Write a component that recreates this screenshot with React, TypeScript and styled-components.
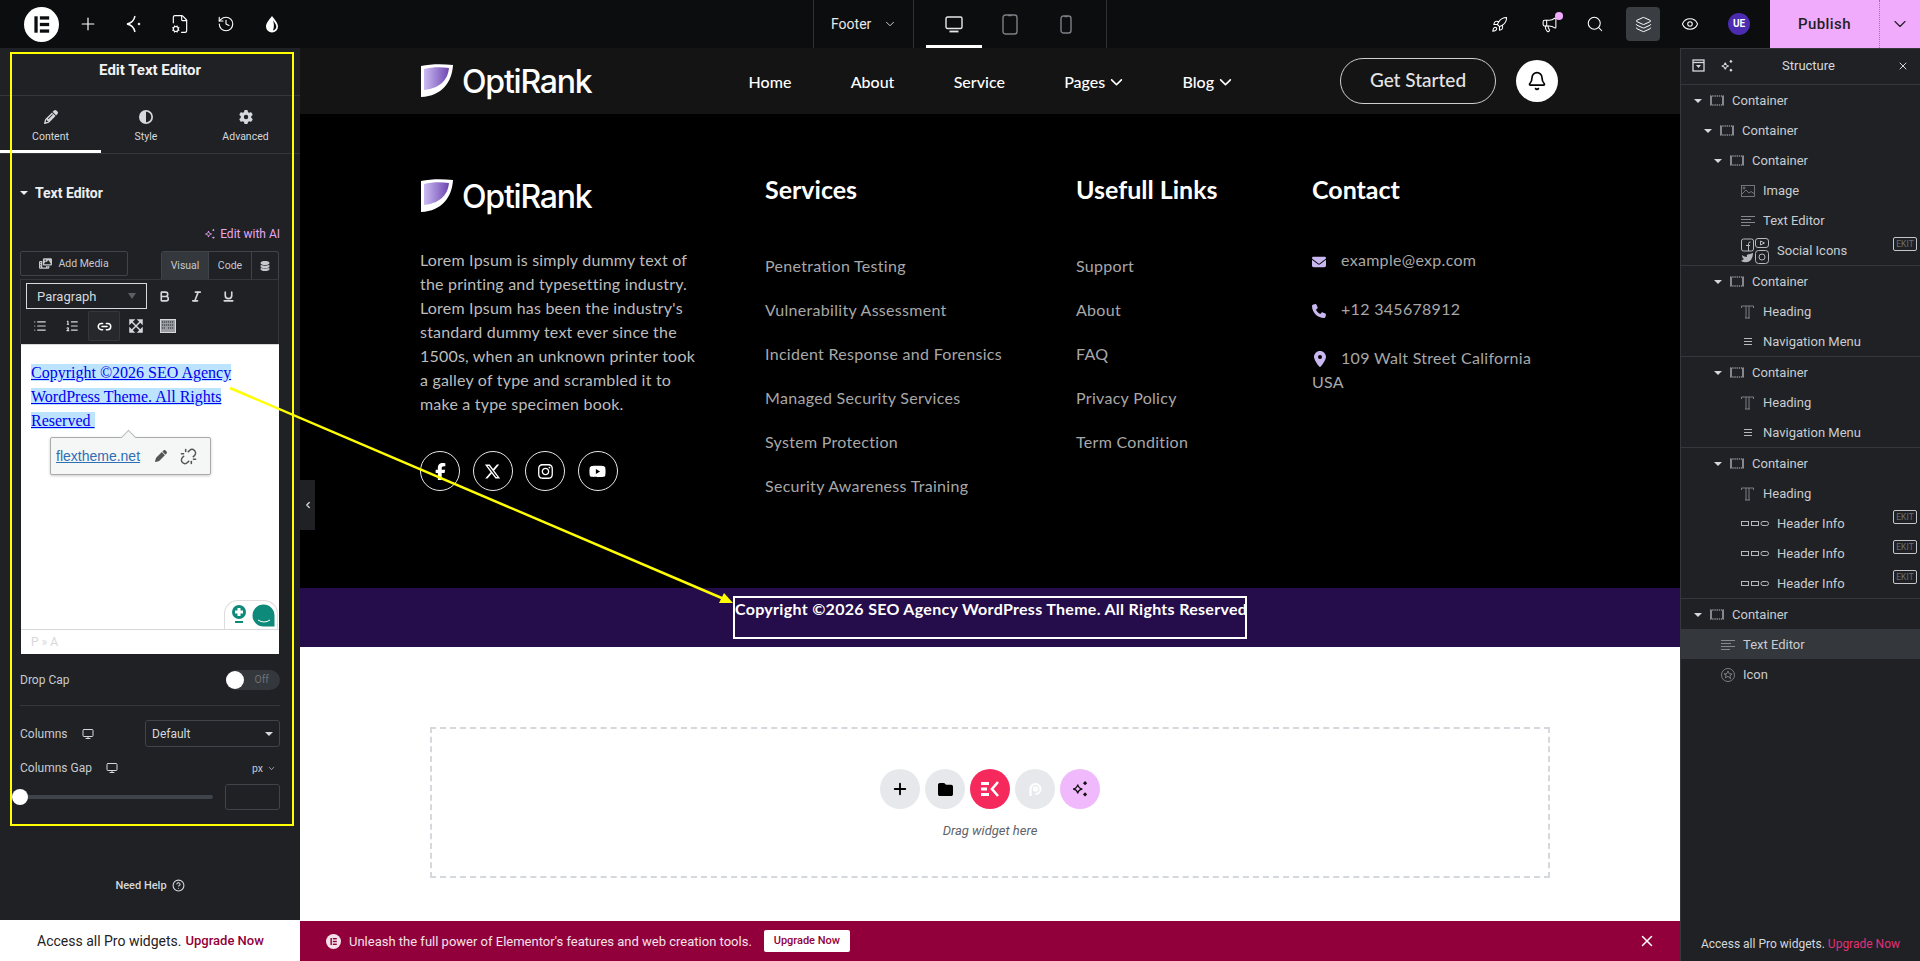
import React from "react";
import styled, { createGlobalStyle } from "styled-components";
import {
  Plus, History, Rocket, Megaphone, Search, Layers, Eye, ChevronDown, ChevronLeft, Bell, Link2, Unlink, Bold, Italic, Underline,
  List, ListOrdered, FileCog, X, Monitor, HelpCircle,
} from "lucide-react";
import { FaFacebookF, FaXTwitter, FaInstagram, FaYoutube, FaChevronDown, FaPhone, FaLocationDot, FaEnvelope, FaPencil, FaCircleHalfStroke, FaGear, FaPen, FaFolder, FaDatabase, FaPhotoFilm } from "react-icons/fa6";

const Global = createGlobalStyle`
  html, body { margin: 0; padding: 0; height: 100%; overflow: hidden; background: #fff; }
  #root { height: 100%; }
  * { box-sizing: border-box; }
`;

const UI = `Roboto, "Liberation Sans", sans-serif`;
const SITE = `Lato, "Open Sans", sans-serif`;

const Page = styled.div`
  position: relative;
  width: 1920px;
  height: 961px;
  display: grid;
  grid-template-rows: 48px 1fr;
  font-family: ${UI};
  overflow: hidden;
`;

/* ---------- top bar ---------- */
const TopBar = styled.header`
  display: flex;
  align-items: stretch;
  background: #0c0d0e;
  color: #fff;
`;
const TopLeft = styled.div`
  width: 813px;
  display: flex;
  align-items: center;
  padding-left: 24px;
`;
const LogoCircle = styled.div`
  width: 35px;
  height: 35px;
  margin-right: 6px;
  flex: none;
`;
const TopIcon = styled.div<{ $w?: number }>`
  width: ${(p) => p.$w ?? 46}px;
  display: flex;
  align-items: center;
  justify-content: center;
  color: #fff;
`;
const TemplateSwitch = styled.div`
  width: 101px;
  border-left: 1px solid #2f3237;
  border-right: 1px solid #2f3237;
  display: flex;
  align-items: center;
  padding-left: 17px;
  gap: 12px;
  font-size: 14px;
  color: #e6e8ea;
`;
const Devices = styled.div`
  width: 193px;
  border-right: 1px solid #2f3237;
  display: flex;
  padding-left: 12px;
`;
const DeviceTab = styled.div<{ $active?: boolean }>`
  width: 56px;
  display: flex;
  align-items: center;
  justify-content: center;
  color: ${(p) => (p.$active ? "#e6e8ea" : "#7c8087")};
  border-bottom: 3px solid ${(p) => (p.$active ? "#fff" : "transparent")};
  padding-top: 3px;
`;
const TopRight = styled.div`
  margin-left: auto;
  display: flex;
  align-items: center;
`;
const RightIcons = styled.div`
  display: flex;
  align-items: center;
  margin-right: 20px;
`;
const NoticeWrap = styled.div`
  position: relative;
  display: flex;
`;
const NoticeDot = styled.span`
  position: absolute;
  top: -4px;
  right: -5px;
  width: 8px;
  height: 8px;
  border-radius: 50%;
  background: #f0abfc;
`;
const LayersBox = styled.div`
  width: 34px;
  height: 34px;
  border-radius: 4px;
  background: #3a3d42;
  display: flex;
  align-items: center;
  justify-content: center;
  margin: 0 8px 0 10px;
`;
const Avatar = styled.div`
  width: 22px;
  height: 22px;
  border-radius: 50%;
  background: #4b2bb0;
  color: #fff;
  font: 700 10px/22px ${UI};
  text-align: center;
  margin-left: 16px;
`;
const PublishBtn = styled.div`
  width: 150px;
  height: 48px;
  background: #f0abfc;
  color: #1f2124;
  display: grid;
  grid-template-columns: 109px 1fr;
  align-items: center;
  font: 500 15px ${UI};
  letter-spacing: 0.4px;
`;
const PublishLabel = styled.span`
  text-align: center;
`;
const PublishMore = styled.span`
  height: 100%;
  border-left: 1px dotted #9a6fa5;
  display: flex;
  align-items: center;
  justify-content: center;
`;

/* ---------- body ---------- */
const Body = styled.div`
  display: grid;
  grid-template-columns: 300px 1fr 240px;
  min-height: 0;
`;
const LeftCol = styled.aside`
  display: flex;
  flex-direction: column;
`;
const Panel = styled.div`
  flex: 1;
  background: #1f2124;
  color: #d5d8dc;
  display: flex;
  flex-direction: column;
  position: relative;
`;
const PanelTitle = styled.div`
  height: 48px;
  border-bottom: 1px solid #34383c;
  display: flex;
  align-items: center;
  justify-content: center;
  font: 700 15px ${UI};
  color: #f0f1f3;
  padding-bottom: 3px;
`;
const Tabs = styled.div`
  height: 58px;
  border-bottom: 1px solid #34383c;
  display: grid;
  grid-template-columns: 101px 90px 109px;
`;
const Tab = styled.div<{ $active?: boolean }>`
  display: flex;
  flex-direction: column;
  align-items: center;
  padding-top: 14px;
  gap: 6px;
  font-size: 10.5px;
  color: #d5d8dc;
  border-bottom: 3px solid ${(p) => (p.$active ? "#fff" : "transparent")};
  height: 57px;
`;
const SectionTitle = styled.div`
  margin: 29px 20px 0;
  height: 20px;
  display: flex;
  align-items: center;
  gap: 7px;
  font: 700 14px ${UI};
  color: #eceef0;
`;
const Caret = styled.span`
  width: 0;
  height: 0;
  border-left: 4px solid transparent;
  border-right: 4px solid transparent;
  border-top: 4px solid currentColor;
`;
const EditAI = styled.div`
  margin: 21px 20px 0;
  height: 20px;
  display: flex;
  justify-content: flex-end;
  align-items: center;
  gap: 4px;
  font-size: 12px;
  color: #e7a6f0;
`;
const EditorTabs = styled.div`
  margin: 7px 21px 0 20px;
  height: 28px;
  display: flex;
`;
const AddMedia = styled.div`
  width: 108px;
  height: 25px;
  border: 1px solid #3f444b;
  border-radius: 2px;
  display: flex;
  align-items: center;
  justify-content: center;
  gap: 6px;
  font-size: 10.5px;
  color: #c6c9cd;
`;
const ModeTabs = styled.div`
  margin-left: auto;
  display: flex;
  border: 1px solid #3f444b;
  border-bottom: 0;
  border-radius: 3px 3px 0 0;
`;
const ModeTab = styled.div<{ $active?: boolean; $w: number }>`
  width: ${(p) => p.$w}px;
  display: flex;
  align-items: center;
  justify-content: center;
  font-size: 10.5px;
  color: #c6c9cd;
  background: ${(p) => (p.$active ? "#34383c" : "transparent")};
  & + & {
    border-left: 1px solid #3f444b;
  }
`;
const Toolbar = styled.div`
  margin: 0 21px 0 20px;
  height: 65px;
  border: 1px solid #34383c;
  border-bottom: 0;
  padding: 1px 5px 0;
  display: flex;
  flex-direction: column;
`;
const ToolRow = styled.div<{ $shift?: number }>`
  display: flex;
  align-items: center;
  margin-left: ${(p) => p.$shift ?? 0}px;
`;
const ParagraphSelect = styled.div`
  width: 121px;
  height: 26px;
  border: 1px solid #d5d8dc;
  display: flex;
  align-items: center;
  justify-content: space-between;
  padding: 0 10px;
  font-size: 13px;
  color: #d5d8dc;
  margin-right: 1px;
`;
const DimCaret = styled(Caret)`
  color: #5c6066;
  border-top-width: 6px;
`;
const ToolBtn = styled.div<{ $active?: boolean }>`
  width: 32px;
  height: 30px;
  display: flex;
  align-items: center;
  justify-content: center;
  color: #d5d8dc;
  border-radius: 2px;
  background: ${(p) => (p.$active ? "#26282b" : "transparent")};
  box-shadow: ${(p) => (p.$active ? "inset 0 0 0 1px #34383c" : "none")};
`;
const Editor = styled.div`
  margin: 0 21px;
  height: 310px;
  background: #fff;
  display: flex;
  flex-direction: column;
  border-top: 1px solid #d6d8dc;
  position: relative;
`;
const EditorBody = styled.div`
  flex: 1;
  padding: 16px 10px 0;
  font: 16px/24px "Liberation Serif", serif;
  position: relative;
`;
const Selected = styled.a`
  color: #0000ee;
  text-decoration: underline;
  background: #bde4ff;
`;
const LinkPopup = styled.div`
  position: absolute;
  left: 29px;
  top: 92px;
  width: 161px;
  height: 38px;
  background: #f5f6f6;
  border: 1px solid #aaa;
  border-radius: 2px;
  box-shadow: 0 1px 3px rgba(0, 0, 0, 0.2);
  display: flex;
  align-items: center;
  padding: 0 5px;
  gap: 13px;
  font: 14px "Liberation Sans", sans-serif;
  &::before {
    content: "";
    position: absolute;
    left: 72px;
    top: -6px;
    width: 10px;
    height: 10px;
    background: #f5f6f6;
    border-left: 1px solid #bbb;
    border-top: 1px solid #bbb;
    transform: rotate(45deg);
  }
`;
const PopupLink = styled.a`
  color: #2d6fb5;
  text-decoration: underline;
  margin-right: 2px;
`;
const GrammarBadge = styled.div`
  position: absolute;
  right: 1px;
  bottom: 0;
  width: 54px;
  height: 29px;
  background: #fff;
  border: 1px solid #ddd;
  border-bottom: 0;
  border-radius: 14px 14px 0 0;
  display: flex;
  align-items: center;
  gap: 5px;
  padding-left: 6px;
  color: #0e8a7a;
`;
const StatusBar = styled.div`
  height: 25px;
  border-top: 1px solid #d6d8dc;
  display: flex;
  align-items: center;
  padding-left: 10px;
  font: 12px ${UI};
  color: #d6d8dc;
`;
const Field = styled.div<{ $mt: number; $h: number }>`
  margin: ${(p) => p.$mt}px 20px 0;
  height: ${(p) => p.$h}px;
  display: flex;
  align-items: center;
  font-size: 12px;
  color: #c6cbd2;
`;
const Toggle = styled.div`
  margin-left: auto;
  width: 54px;
  height: 20px;
  border-radius: 10px;
  background: #34383c;
  position: relative;
  font-size: 10.5px;
  color: #6c7178;
  text-align: right;
  line-height: 19px;
  padding-right: 11px;
  &::before {
    content: "";
    position: absolute;
    left: 0;
    top: 1px;
    width: 18px;
    height: 18px;
    border-radius: 50%;
    background: #fff;
  }
`;
const Rule = styled.div`
  margin: 15px 20px 0;
  height: 1px;
  background: #34383c;
`;
const DeviceIcon = styled.span`
  display: flex;
  margin-left: 14px;
  color: #d5d8dc;
`;
const ColumnsSelect = styled.div`
  margin-left: auto;
  width: 135px;
  height: 27px;
  border: 1px solid #3f444b;
  border-radius: 3px;
  display: flex;
  align-items: center;
  justify-content: space-between;
  padding: 0 6px;
  color: #d5d8dc;
`;
const UnitLabel = styled.span`
  margin-left: auto;
  display: flex;
  align-items: center;
  gap: 4px;
  font-size: 10.5px;
  margin-right: 4px;
`;
const SliderTrack = styled.div`
  width: 193px;
  height: 4px;
  background: #3f444b;
  border-radius: 2px;
  position: relative;
`;
const SliderKnob = styled.span`
  position: absolute;
  left: -8px;
  top: -6px;
  width: 16px;
  height: 16px;
  border-radius: 50%;
  background: #fff;
`;
const NumberBox = styled.div`
  margin-left: auto;
  width: 55px;
  height: 26px;
  border: 1px solid #3f444b;
  border-radius: 3px;
`;
const NeedHelp = styled.div`
  margin: auto 0 25px;
  height: 20px;
  display: flex;
  align-items: center;
  justify-content: center;
  gap: 5px;
  font: 500 11px ${UI};
  color: #d5d8dc;
`;
const ProStrip = styled.div`
  height: 41px;
  background: #fff;
  color: #1f2124;
  font-size: 14px;
  display: flex;
  align-items: center;
  padding-left: 37px;
  gap: 4px;
`;
const UpgradeLink = styled.span`
  color: #92003b;
  font-size: 13px;
  font-weight: 500;
`;

/* ---------- canvas ---------- */
const Canvas = styled.main`
  display: flex;
  flex-direction: column;
  position: relative;
  min-width: 0;
  font-family: ${SITE};
`;
const Collapse = styled.div`
  position: absolute;
  left: 0;
  top: 432px;
  width: 15px;
  height: 50px;
  background: #1f2124;
  color: #d5d8dc;
  display: flex;
  align-items: center;
  justify-content: center;
`;
const SiteHeader = styled.div`
  height: 66px;
  background: #141414;
  display: flex;
  align-items: center;
  padding: 0 122px 0 120px;
  color: #fff;
`;
const Brand = styled.div`
  display: flex;
  align-items: center;
  gap: 9px;
`;
const BrandText = styled.span`
  font: 500 32px "Inter", sans-serif;
  letter-spacing: -1.2px;
  color: #fff;
`;
const Nav = styled.nav`
  display: flex;
  margin-left: 157px;
  gap: 59px;
  font-size: 16px;
  font-weight: 500;
`;
const NavItem = styled.span`
  display: flex;
  align-items: center;
  gap: 5px;
  & + & {
    margin-left: 0.3px;
  }
`;
const GetStarted = styled.div`
  margin-left: auto;
  width: 156px;
  height: 46px;
  border: 1px solid #cfcfcf;
  border-radius: 23px;
  display: flex;
  align-items: center;
  justify-content: center;
  padding-bottom: 3px;
  font-size: 19px;
  font-weight: 500;
  color: #e4e4e4;
`;
const BellBtn = styled.div`
  margin-left: 20px;
  width: 42px;
  height: 42px;
  border-radius: 50%;
  background: #fff;
  color: #000;
  display: flex;
  align-items: center;
  justify-content: center;
`;
const Footer = styled.section`
  height: 474px;
  background: #000;
  color: #fff;
  display: grid;
  grid-template-columns: 345px 311px 236px 1fr;
  padding: 50px 0 0 120px;
`;
const FootCol = styled.div`
  display: flex;
  flex-direction: column;
`;
const BrandRow = styled(Brand)`
  height: 34px;
  margin-top: 15px;
`;
const AboutText = styled.p`
  margin: 35px 0 0;
  width: 280px;
  font-size: 16px;
  line-height: 24px;
  color: #bdbdbd;
  letter-spacing: 0.2px;
`;
const Socials = styled.div`
  display: flex;
  gap: 12.5px;
  margin-top: 35px;
`;
const SocialBtn = styled.div`
  width: 40px;
  height: 40px;
  border: 1px solid #e8e8e8;
  border-radius: 50%;
  display: flex;
  align-items: center;
  justify-content: center;
  color: #fff;
  font-size: 17px;
`;
const ColTitle = styled.h3`
  margin: 10px 0 0;
  font-size: 25px;
  line-height: 30px;
  font-weight: 700;
  color: #fff;
`;
const LinkList = styled.ul`
  list-style: none;
  margin: 52px 0 0;
  padding: 0;
  display: flex;
  flex-direction: column;
  gap: 24px;
  font-size: 16px;
  line-height: 20px;
  letter-spacing: 0.3px;
  color: #a8a8a8;
`;
const ContactList = styled.div`
  margin-top: 44px;
  display: flex;
  flex-direction: column;
  gap: 25px;
  font-size: 16px;
  line-height: 24px;
  letter-spacing: 0.3px;
  color: #a8a8a8;
  width: 236px;
`;
const ContactItem = styled.div`
  position: relative;
  text-indent: 29px;
`;
const ContactGlyph = styled.span`
  position: absolute;
  left: 0;
  top: 4px;
  color: #c9b8ef;
  font-size: 14px;
  text-indent: 0;
`;
const CopyBand = styled.div`
  height: 59px;
  background: #250c4a;
  display: flex;
  align-items: flex-start;
  justify-content: center;
  padding: 8px 0 0 0;
`;
const CopyBox = styled.div`
  width: 514px;
  height: 43px;
  border: 2px solid #fff;
  color: #fff;
  font-size: 16px;
  font-weight: 700;
  line-height: 22px;
  padding-left: 0;
  letter-spacing: 0.3px;
  white-space: nowrap;
`;
const WhiteArea = styled.div`
  flex: 1;
  background: #fff;
  padding: 80px 130px 43px;
  display: flex;
`;
const DropZone = styled.div`
  flex: 1;
  border: 2px dashed #d5d8dc;
  display: flex;
  flex-direction: column;
  align-items: center;
  padding-top: 40px;
  font-family: ${UI};
`;
const DropBtns = styled.div`
  display: flex;
  gap: 5px;
`;
const DropBtn = styled.div<{ $bg: string; $fg: string }>`
  width: 40px;
  height: 40px;
  border-radius: 50%;
  background: ${(p) => p.$bg};
  color: ${(p) => p.$fg};
  display: flex;
  align-items: center;
  justify-content: center;
`;
const DragHint = styled.div`
  margin-top: 14px;
  font-size: 13px;
  font-style: italic;
  color: #5f6368;
`;
const PromoBar = styled.div`
  height: 40px;
  background: #92003b;
  display: flex;
  align-items: center;
  padding: 0 24px 0 26px;
  color: #f3e2ea;
  font: 13px ${UI};
`;
const PromoLogo = styled.span`
  display: flex;
  margin-right: 8px;
`;
const PromoBtn = styled.div`
  margin-left: 12px;
  width: 86px;
  height: 22px;
  background: #fff;
  border-radius: 2px;
  color: #92003b;
  font: 500 11px/22px ${UI};
  text-align: center;
`;
const PromoClose = styled.span`
  margin-left: auto;
  display: flex;
  color: #fff;
`;

/* ---------- structure ---------- */
const Structure = styled.aside`
  background: #1f2124;
  border-left: 1px solid #34383c;
  border-top: 1px solid #34383c;
  display: flex;
  flex-direction: column;
  color: #c9ccd0;
`;
const StructHead = styled.div`
  height: 36px;
  border-bottom: 1px solid #34383c;
  display: flex;
  align-items: center;
  padding: 0 11px 2px 11px;
  font-size: 13px;
  color: #d5d8dc;
`;
const StructTitle = styled.span`
  margin-left: 48px;
`;
const StructIcon = styled.span`
  display: flex;
  margin-left: 15px;
`;
const StructClose = styled.span`
  display: flex;
  margin-left: auto;
`;
const Group = styled.div<{ $last?: boolean }>`
  border-bottom: ${(p) => (p.$last ? "0" : "1px solid #34383c")};
`;
const Row = styled.div<{ $depth: number; $active?: boolean }>`
  height: 30px;
  display: flex;
  align-items: center;
  padding: 1px 0 0 ${(p) => p.$depth}px;
  font-size: 13px;
  background: ${(p) => (p.$active ? "#34383c" : "transparent")};
  color: #c9ccd0;
  position: relative;
`;
const RowCaret = styled(Caret)`
  margin-right: 8px;
  color: #d5d8dc;
`;
const RowIcon = styled.span<{ $w?: number }>`
  width: ${(p) => p.$w ?? 15}px;
  display: flex;
  margin-right: 7px;
  color: #85898f;
`;
const Ekit = styled.span`
  position: absolute;
  right: 3px;
  top: 2px;
  width: 24px;
  height: 14px;
  border: 1px solid #c4c6c9;
  border-radius: 2px;
  font-size: 8.5px;
  line-height: 12px;
  text-align: center;
  color: #6a6e74;
`;
const StructFoot = styled.div`
  margin-top: auto;
  height: 24px;
  display: flex;
  align-items: flex-start;
  justify-content: center;
  gap: 3px;
  font-size: 12px;
  color: #d5d8dc;
`;
const UpgradePink = styled.span`
  color: #e0317a;
`;

/* ---------- annotations ---------- */
const YellowFrame = styled.div`
  position: absolute;
  left: 10px;
  top: 52px;
  width: 284px;
  height: 774px;
  border: 2.5px solid #ffff00;
  pointer-events: none;
`;
const ArrowLayer = styled.svg`
  position: absolute;
  inset: 0;
  pointer-events: none;
`;

/* ---------- drawings ---------- */
const ELogo = ({ size, bg, fg }: { size: number; bg: string; fg: string }) => (
  <svg width={size} height={size} viewBox="0 0 32 32">
    <circle cx="16" cy="16" r="16" fill={bg} />
    <rect x="9.5" y="8.5" width="3" height="15" fill={fg} />
    <rect x="14.5" y="8.5" width="8.5" height="3" fill={fg} />
    <rect x="14.5" y="14.5" width="8.5" height="3" fill={fg} />
    <rect x="14.5" y="20.5" width="8.5" height="3" fill={fg} />
  </svg>
);
const Spark = ({ size = 16 }: { size?: number }) => (
  <svg width={size} height={size} viewBox="0 0 16 16" fill="none" stroke="currentColor" strokeWidth="1.2">
    <path d="M6 4 C6.4 6.6 7.2 7.4 10 8 C7.2 8.6 6.4 9.4 6 12 C5.6 9.4 4.8 8.6 2 8 C4.8 7.4 5.6 6.6 6 4Z" />
    <path d="M12.5 1.8 l1 1 l-1 1 l-1 -1Z M12.5 11.8 l1 1 l-1 1 l-1 -1Z" fill="currentColor" />
  </svg>
);
const Mark = () => (
  <svg width="33" height="34" viewBox="0 0 33 34">
    <defs>
      <linearGradient id="mk" x1="0" x2="1" y1="0" y2="0">
        <stop offset="0" stopColor="#cdbcf3" />
        <stop offset="1" stopColor="#6d46b0" />
      </linearGradient>
    </defs>
    <path d="M1 2 C11 0 22 0 33 1 C32 18 22 32 1 33Z" fill="#fff" />
    <path d="M4 5 C12 3 21 3 29 4 C28 14 22 24 4 26Z" fill="url(#mk)" />
  </svg>
);
const ContainerIco = () => (
  <svg width="14" height="11" viewBox="0 0 14 11" fill="none" stroke="#85898f">
    <path d="M0 1h14M0 10h14" strokeWidth="1.6" strokeDasharray="1.4 .8" />
    <path d="M1 1v9M13 1v9" strokeWidth="2" />
  </svg>
);
const ImageIco = () => (
  <svg width="14" height="12" viewBox="0 0 14 12" fill="none" stroke="#85898f" strokeWidth="0.8">
    <rect x="0.5" y="0.5" width="13" height="11" />
    <path d="M1 9l4-4 3 3 2-1.5 3 2" />
    <circle cx="3" cy="3" r="1" />
  </svg>
);
const TextIco = () => (
  <svg width="14" height="10" viewBox="0 0 14 10" stroke="#85898f">
    <path d="M0 .5h14M0 3.5h10M0 6.5h14M0 9.5h9" />
  </svg>
);
const HeadingIco = () => (
  <svg width="13" height="14" viewBox="0 0 13 14" fill="none" stroke="#85898f" strokeWidth="0.9">
    <path d="M0.5 3V1h12v2M5 1v12M8 1v12M4 13h5" />
  </svg>
);
const NavIco = () => (
  <svg width="14" height="8" viewBox="0 0 14 8" stroke="#b5b8bc">
    <path d="M3 .5h8M3 3.5h8M3 6.5h8" />
  </svg>
);
const SocialIco = () => (
  <svg width="28" height="26" viewBox="0 0 28 26" fill="none" stroke="#b5b8bc">
    <rect x="0.5" y="1" width="12" height="12" rx="2" />
    <path d="M7.5 13V5.5q0-1.5 2-1.5M5 7.5h4" />
    <rect x="14.5" y="0.5" width="13" height="9" rx="2.5" />
    <path d="M19.5 3l4 2-4 2z" />
    <rect x="14.5" y="12.5" width="13" height="13" rx="3" />
    <circle cx="21" cy="19" r="3" />
    <path d="M0 23q6 3 10-1 2-3 2-7l-3 1q-4 0-3 3-3 0-5-2 0 3 2 4z" fill="#b5b8bc" stroke="none" />
  </svg>
);
const InfoIco = () => (
  <svg width="28" height="6" viewBox="0 0 28 6" fill="none" stroke="#b5b8bc">
    <rect x="0.5" y="0.5" width="7" height="4" />
    <rect x="10.5" y="0.5" width="7" height="4" />
    <rect x="20" y="0.5" width="7.5" height="4" rx="2" />
  </svg>
);
const StarCircleIco = () => (
  <svg width="14" height="14" viewBox="0 0 14 14" fill="none" stroke="#85898f" strokeWidth="0.9">
    <circle cx="7" cy="7" r="6.5" />
    <path d="M7 3l1.2 2.7 2.9.3-2.2 1.9.7 2.9L7 8.4 4.4 9.8l.7-2.9L3 6l2.8-.3z" />
  </svg>
);
const DesktopIco = () => (
  <svg width="18" height="17" viewBox="0 0 18 17" fill="none" stroke="currentColor" strokeWidth="1.4">
    <rect x="1" y="1" width="16" height="11.5" rx="1.5" />
    <path d="M4.5 15.5h9" strokeWidth="1.8" />
  </svg>
);
const TabletIco = () => (
  <svg width="16" height="21" viewBox="0 0 16 21" fill="none" stroke="currentColor" strokeWidth="1.4">
    <rect x="1" y="1" width="14" height="19" rx="2.5" />
    <path d="M6 1.5h4" />
  </svg>
);
const MobileIco = () => (
  <svg width="12" height="19" viewBox="0 0 12 19" fill="none" stroke="currentColor" strokeWidth="1.4">
    <rect x="1" y="1" width="10" height="17" rx="2.5" />
    <path d="M4.5 1.5h3" />
  </svg>
);
const DropIco = () => (
  <svg width="14" height="18" viewBox="0 0 14 18">
    <path d="M7 1 C10 5 13 8 13 11.5 A6 6 0 0 1 1 11.5 C1 8 4 5 7 1Z" fill="#fff" />
    <path d="M8 5.5 C10 8 11.3 9.8 11.3 11.5 C11.3 13.6 10 15 8 15.4 C9.2 12 9.2 9 8 5.5Z" fill="#0c0d0e" />
  </svg>
);
const NeuralIco = () => (
  <svg width="22" height="22" viewBox="0 0 22 22" fill="none" stroke="#fff" strokeWidth="1.4">
    <path d="M12 3 C11 8 9 10 4 11 C9 12 11 14 12 19" />
    <path d="M16 9.5l1.5 1.5-1.5 1.5-1.5-1.5z" fill="#fff" stroke="none" />
  </svg>
);
const KitchenIco = () => (
  <svg width="16" height="14" viewBox="0 0 16 14">
    <rect x="0.5" y="0.5" width="15" height="13" fill="#9a9da2" stroke="#d5d8dc" />
    <path d="M2 3h12M2 6h12M2 9h3M8 9h6" stroke="#1f2124" strokeDasharray="1.2 .8" />
  </svg>
);
const ExpandIco = () => (
  <svg width="14" height="14" viewBox="0 0 14 14" stroke="#d5d8dc" strokeWidth="1.5" fill="#d5d8dc">
    <path d="M3 3l8 8M11 3l-8 8" />
    <path d="M1 1h3.5L1 4.5zM13 1h-3.5L13 4.5zM1 13h3.5L1 9.5zM13 13h-3.5L13 9.5z" />
  </svg>
);
const BulbIco = () => (
  <svg width="16" height="20" viewBox="0 0 16 20">
    <circle cx="8" cy="7" r="7" fill="#0e8a7a" />
    <path d="M8 3v8M4 7h8" stroke="#fff" strokeWidth="3" />
    <rect x="4" y="16" width="8" height="2" fill="#0e8a7a" />
  </svg>
);
const BubbleIco = () => (
  <svg width="23" height="23" viewBox="0 0 23 23">
    <path d="M11.5 0.5 A11 11 0 0 1 22.5 11.5 V22.5 H11.5 A11 11 0 0 1 0.5 11.5 A11 11 0 0 1 11.5 .5Z" fill="#0e8a7a" />
    <path d="M6 16q6 4 12 0" stroke="#fff" fill="none" />
  </svg>
);
const EkitsLogo = () => (
  <svg width="20" height="16" viewBox="0 0 20 16" fill="#fff">
    <rect x="1" y="1" width="8" height="3" />
    <rect x="1" y="6.5" width="6" height="3" />
    <rect x="1" y="12" width="8" height="3" />
    <path d="M18 1l-6 7 6 7" fill="none" stroke="#fff" strokeWidth="2.6" />
  </svg>
);
const PpLogo = () => (
  <svg width="18" height="18" viewBox="0 0 18 18" fill="none" stroke="#fff" strokeWidth="2.2">
    <path d="M4.5 16 V9 A5 5 0 1 1 9.5 14" />
    <circle cx="9.5" cy="9" r="1.6" />
  </svg>
);

const GROUPS: { d: number; label: string; ico: string; ekit?: boolean; caret?: boolean; active?: boolean }[][] = [
  [
    { d: 13, label: "Container", ico: "c", caret: true },
    { d: 23, label: "Container", ico: "c", caret: true },
    { d: 33, label: "Container", ico: "c", caret: true },
    { d: 60, label: "Image", ico: "i" },
    { d: 60, label: "Text Editor", ico: "t" },
    { d: 60, label: "Social Icons", ico: "s", ekit: true },
  ],
  [
    { d: 33, label: "Container", ico: "c", caret: true },
    { d: 60, label: "Heading", ico: "h" },
    { d: 60, label: "Navigation Menu", ico: "n" },
  ],
  [
    { d: 33, label: "Container", ico: "c", caret: true },
    { d: 60, label: "Heading", ico: "h" },
    { d: 60, label: "Navigation Menu", ico: "n" },
  ],
  [
    { d: 33, label: "Container", ico: "c", caret: true },
    { d: 60, label: "Heading", ico: "h" },
    { d: 60, label: "Header Info", ico: "f", ekit: true },
    { d: 60, label: "Header Info", ico: "f", ekit: true },
    { d: 60, label: "Header Info", ico: "f", ekit: true },
  ],
  [
    { d: 13, label: "Container", ico: "c", caret: true },
    { d: 40, label: "Text Editor", ico: "t", active: true },
    { d: 40, label: "Icon", ico: "o" },
  ],
];

const rowIcon = (k: string) => {
  switch (k) {
    case "c": return <ContainerIco />;
    case "i": return <ImageIco />;
    case "t": return <TextIco />;
    case "h": return <HeadingIco />;
    case "n": return <NavIco />;
    case "s": return <SocialIco />;
    case "f": return <InfoIco />;
    default: return <StarCircleIco />;
  }
};

const SERVICES = ["Penetration Testing", "Vulnerability Assessment", "Incident Response and Forensics", "Managed Security Services", "System Protection", "Security Awareness Training"];
const LINKS = ["Support", "About", "FAQ", "Privacy Policy", "Term Condition"];

export default function App() {
  return (
    <Page>
      <Global />
      <TopBar>
        <TopLeft>
          <LogoCircle><ELogo size={35} bg="#fff" fg="#0c0d0e" /></LogoCircle>
          <TopIcon><Plus size={20} strokeWidth={1.4} /></TopIcon>
          <TopIcon><NeuralIco /></TopIcon>
          <TopIcon><FileCog size={20} strokeWidth={1.4} /></TopIcon>
          <TopIcon><History size={18} strokeWidth={1.5} /></TopIcon>
          <TopIcon><DropIco /></TopIcon>
        </TopLeft>
        <TemplateSwitch>Footer <ChevronDown size={14} strokeWidth={1.5} /></TemplateSwitch>
        <Devices>
          <DeviceTab $active><DesktopIco /></DeviceTab>
          <DeviceTab><TabletIco /></DeviceTab>
          <DeviceTab><MobileIco /></DeviceTab>
        </Devices>
        <TopRight>
          <RightIcons>
            <TopIcon $w={50}><Rocket size={17} strokeWidth={1.5} /></TopIcon>
            <TopIcon $w={50}><NoticeWrap><Megaphone size={17} strokeWidth={1.5} /><NoticeDot /></NoticeWrap></TopIcon>
            <TopIcon $w={42}><Search size={18} strokeWidth={1.4} /></TopIcon>
            <LayersBox><Layers size={17} strokeWidth={1.4} /></LayersBox>
            <TopIcon $w={44}><Eye size={18} strokeWidth={1.4} /></TopIcon>
            <Avatar>UE</Avatar>
          </RightIcons>
          <PublishBtn>
            <PublishLabel>Publish</PublishLabel>
            <PublishMore><ChevronDown size={20} strokeWidth={1.4} /></PublishMore>
          </PublishBtn>
        </TopRight>
      </TopBar>

      <Body>
        <LeftCol>
          <Panel>
            <PanelTitle>Edit Text Editor</PanelTitle>
            <Tabs>
              <Tab $active><FaPencil size={14} />Content</Tab>
              <Tab><FaCircleHalfStroke size={14} />Style</Tab>
              <Tab><FaGear size={14} />Advanced</Tab>
            </Tabs>
            <SectionTitle><Caret />Text Editor</SectionTitle>
            <EditAI><Spark size={12} />Edit with AI</EditAI>
            <EditorTabs>
              <AddMedia><FaPhotoFilm size={13} />Add Media</AddMedia>
              <ModeTabs>
                <ModeTab $active $w={46}>Visual</ModeTab>
                <ModeTab $w={43}>Code</ModeTab>
                <ModeTab $w={27}><FaDatabase size={10} /></ModeTab>
              </ModeTabs>
            </EditorTabs>
            <Toolbar>
              <ToolRow>
                <ParagraphSelect>Paragraph <DimCaret /></ParagraphSelect>
                <ToolBtn><Bold size={13} strokeWidth={3} /></ToolBtn>
                <ToolBtn><Italic size={13} strokeWidth={3} /></ToolBtn>
                <ToolBtn><Underline size={13} strokeWidth={3} /></ToolBtn>
              </ToolRow>
              <ToolRow $shift={-2}>
                <ToolBtn><List size={14} /></ToolBtn>
                <ToolBtn><ListOrdered size={14} /></ToolBtn>
                <ToolBtn $active><Link2 size={15} strokeWidth={2.4} color="#fff" /></ToolBtn>
                <ToolBtn><ExpandIco /></ToolBtn>
                <ToolBtn><KitchenIco /></ToolBtn>
              </ToolRow>
            </Toolbar>
            <Editor>
              <EditorBody>
                <Selected href="#">Copyright ©2026 SEO Agency WordPress Theme. All Rights Reserved&nbsp;</Selected>
                <LinkPopup>
                  <PopupLink href="#">flextheme.net</PopupLink>
                  <FaPen size={12} color="#555" />
                  <Unlink size={17} color="#555" strokeWidth={2.2} />
                </LinkPopup>
                <GrammarBadge><BulbIco /><BubbleIco /></GrammarBadge>
              </EditorBody>
              <StatusBar>P » A</StatusBar>
            </Editor>
            <Field $mt={16} $h={20}>Drop Cap<Toggle>Off</Toggle></Field>
            <Rule />
            <Field $mt={14} $h={27}>
              Columns<DeviceIcon><Monitor size={12} /></DeviceIcon>
              <ColumnsSelect>Default <Caret /></ColumnsSelect>
            </Field>
            <Field $mt={11} $h={20}>
              Columns Gap<DeviceIcon><Monitor size={12} /></DeviceIcon>
              <UnitLabel>px <ChevronDown size={9} /></UnitLabel>
            </Field>
            <Field $mt={6} $h={26}>
              <SliderTrack><SliderKnob /></SliderTrack>
              <NumberBox />
            </Field>
            <NeedHelp>Need Help <HelpCircle size={13} /></NeedHelp>
          </Panel>
          <ProStrip>Access all Pro widgets. <UpgradeLink>Upgrade Now</UpgradeLink></ProStrip>
        </LeftCol>

        <Canvas>
          <SiteHeader>
            <Brand><Mark /><BrandText>OptiRank</BrandText></Brand>
            <Nav>
              <NavItem>Home</NavItem>
              <NavItem>About</NavItem>
              <NavItem>Service</NavItem>
              <NavItem>Pages <FaChevronDown size={13} /></NavItem>
              <NavItem>Blog <FaChevronDown size={13} /></NavItem>
            </Nav>
            <GetStarted>Get Started</GetStarted>
            <BellBtn><Bell size={20} strokeWidth={2} /></BellBtn>
          </SiteHeader>
          <Footer>
            <FootCol>
              <BrandRow><Mark /><BrandText>OptiRank</BrandText></BrandRow>
              <AboutText>Lorem Ipsum is simply dummy text of the printing and typesetting industry. Lorem Ipsum has been the industry's standard dummy text ever since the 1500s, when an unknown printer took a galley of type and scrambled it to make a type specimen book.</AboutText>
              <Socials>
                <SocialBtn><FaFacebookF /></SocialBtn>
                <SocialBtn><FaXTwitter /></SocialBtn>
                <SocialBtn><FaInstagram /></SocialBtn>
                <SocialBtn><FaYoutube /></SocialBtn>
              </Socials>
            </FootCol>
            <FootCol>
              <ColTitle>Services</ColTitle>
              <LinkList>{SERVICES.map((s) => <li key={s}>{s}</li>)}</LinkList>
            </FootCol>
            <FootCol>
              <ColTitle>Usefull Links</ColTitle>
              <LinkList>{LINKS.map((s) => <li key={s}>{s}</li>)}</LinkList>
            </FootCol>
            <FootCol>
              <ColTitle>Contact</ColTitle>
              <ContactList>
                <ContactItem><ContactGlyph><FaEnvelope /></ContactGlyph>example@exp.com</ContactItem>
                <ContactItem><ContactGlyph><FaPhone /></ContactGlyph>+12 345678912</ContactItem>
                <ContactItem><ContactGlyph><FaLocationDot size={16} /></ContactGlyph>109 Walt Street California USA</ContactItem>
              </ContactList>
            </FootCol>
          </Footer>
          <CopyBand><CopyBox>Copyright ©2026 SEO Agency WordPress Theme. All Rights Reserved</CopyBox></CopyBand>
          <WhiteArea>
            <DropZone>
              <DropBtns>
                <DropBtn $bg="#e6e8ec" $fg="#000"><Plus size={18} strokeWidth={2.5} /></DropBtn>
                <DropBtn $bg="#e6e8ec" $fg="#000"><FaFolder size={15} /></DropBtn>
                <DropBtn $bg="#f5295c" $fg="#fff"><EkitsLogo /></DropBtn>
                <DropBtn $bg="#e6e8ec" $fg="#fff"><PpLogo /></DropBtn>
                <DropBtn $bg="#f0b9fc" $fg="#111"><Spark size={18} /></DropBtn>
              </DropBtns>
              <DragHint>Drag widget here</DragHint>
            </DropZone>
          </WhiteArea>
          <PromoBar>
            <PromoLogo><ELogo size={15} bg="#f3e2ea" fg="#92003b" /></PromoLogo>
            Unleash the full power of Elementor's features and web creation tools.
            <PromoBtn>Upgrade Now</PromoBtn>
            <PromoClose><X size={18} strokeWidth={2} /></PromoClose>
          </PromoBar>
          <Collapse><ChevronLeft size={10} strokeWidth={3} /></Collapse>
        </Canvas>

        <Structure>
          <StructHead>
            <svg width="13" height="13" viewBox="0 0 13 13" fill="none" stroke="#d5d8dc" strokeWidth="1.3">
              <rect x="1" y="1" width="11" height="11" />
              <path d="M1 3.5h11" />
              <path d="M4 6h5L6.5 9z" fill="#d5d8dc" stroke="none" />
            </svg>
            <StructIcon><Spark size={14} /></StructIcon>
            <StructTitle>Structure</StructTitle>
            <StructClose><X size={12} /></StructClose>
          </StructHead>
          {GROUPS.map((g, i) => (
            <Group key={i} $last={i === GROUPS.length - 1}>
              {g.map((r, j) => (
                <Row key={j} $depth={r.d} $active={r.active}>
                  {r.caret && <RowCaret />}
                  <RowIcon $w={r.ico === "s" || r.ico === "f" ? 29 : 15}>{rowIcon(r.ico)}</RowIcon>
                  {r.label}
                  {r.ekit && <Ekit>EKIT</Ekit>}
                </Row>
              ))}
            </Group>
          ))}
          <StructFoot>Access all Pro widgets. <UpgradePink>Upgrade Now</UpgradePink></StructFoot>
        </Structure>
      </Body>

      <YellowFrame />
      <ArrowLayer width="1920" height="961" viewBox="0 0 1920 961">
        <path d="M230 388 L724 599" stroke="#ffff00" strokeWidth="2.5" fill="none" />
        <path d="M733 603 L719 603 L724 593Z" fill="#ffff00" />
      </ArrowLayer>
    </Page>
  );
}
